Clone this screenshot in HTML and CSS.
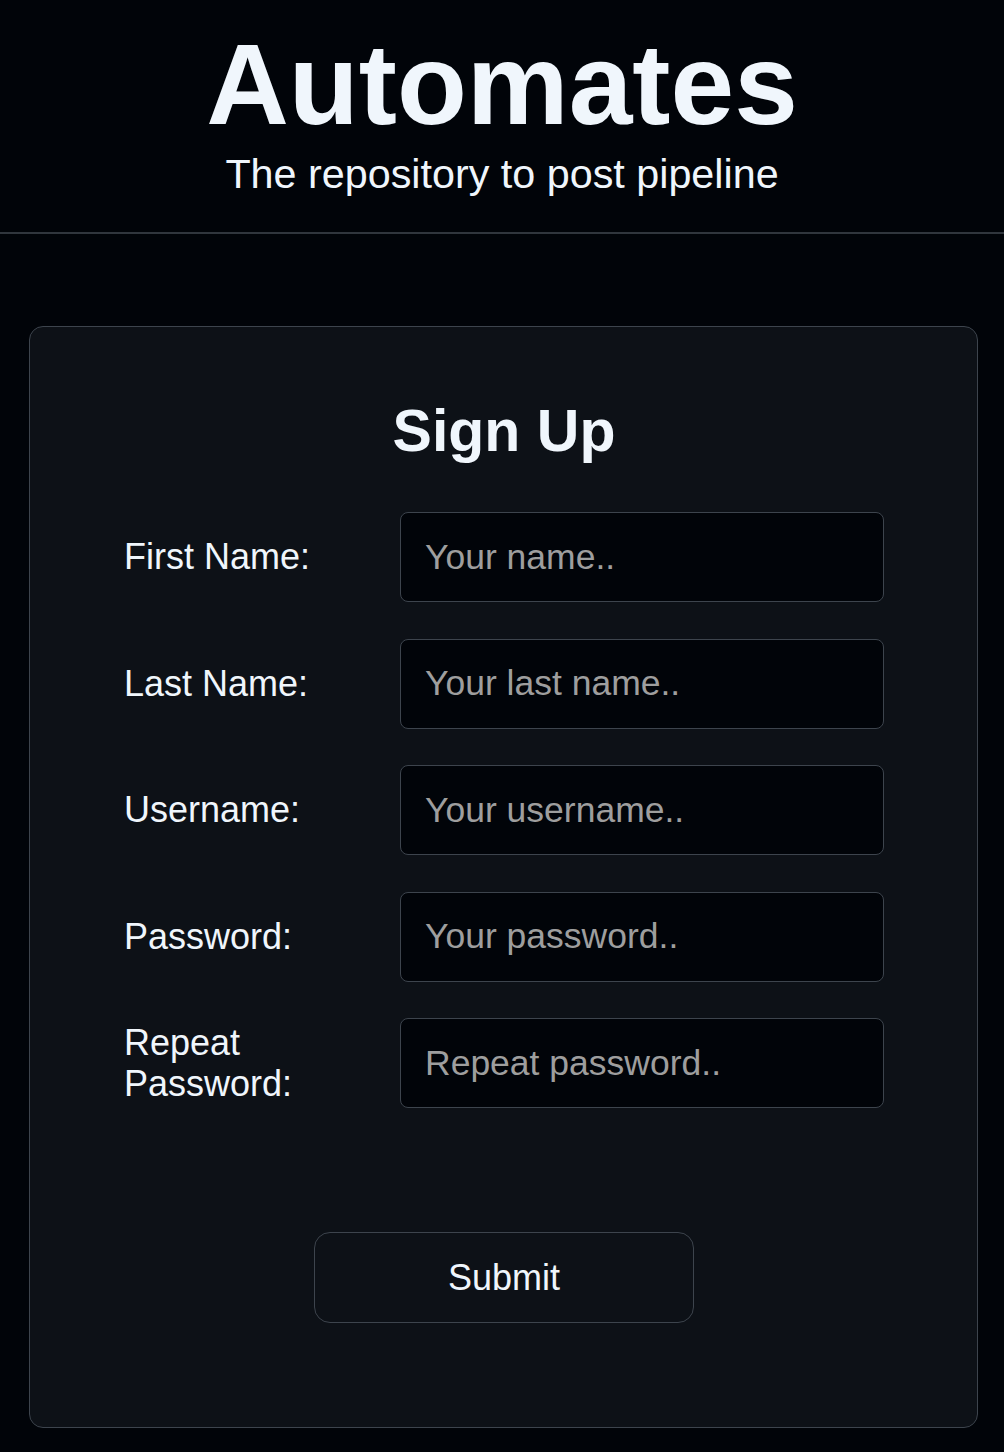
FILE: index.html
```html
<!DOCTYPE html>
<html lang="en">
<head>
<meta charset="utf-8">
<title>Automates - Sign Up</title>
<link rel="stylesheet" href="styles.css">
</head>
<body>
<header class="site-header">
  <h1 class="site-title">Automates</h1>
  <p class="site-tagline">The repository to post pipeline</p>
</header>
<main class="card">
  <h2 class="card-title">Sign Up</h2>
  <form class="signup-form">
    <label class="field-label" for="first">First Name:</label>
    <input class="field-input" id="first" type="text" placeholder="Your name..">
    <label class="field-label" for="last">Last Name:</label>
    <input class="field-input" id="last" type="text" placeholder="Your last name..">
    <label class="field-label" for="user">Username:</label>
    <input class="field-input" id="user" type="text" placeholder="Your username..">
    <label class="field-label" for="pass">Password:</label>
    <input class="field-input" id="pass" type="password" placeholder="Your password..">
    <label class="field-label" for="pass2">Repeat Password:</label>
    <input class="field-input" id="pass2" type="password" placeholder="Repeat password..">
    <div class="submit-row">
      <button class="submit-btn" type="submit">Submit</button>
    </div>
  </form>
</main>
</body>
</html>
```

FILE: styles.css
```css
* {
  box-sizing: border-box;
}

html, body {
  margin: 0;
  padding: 0;
  background: #010409;
}

body {
  font-family: "Liberation Sans", Helvetica, Arial, sans-serif;
  color: #f0f6fc;
  min-height: 1452px;
  overflow: hidden;
}

.site-header {
  padding: 27px 0 34px;
  text-align: center;
  border-bottom: 2px solid #30363d;
}

.site-title {
  margin: 0;
  font-size: 114.5px;
  line-height: 114px;
  font-weight: 700;
  color: #f0f6fc;
}

.site-tagline {
  margin: 9px 0 0;
  font-size: 41.3px;
  line-height: 48px;
  color: #f0f6fc;
}

.card {
  margin: 92px 26px 0 29px;
  padding: 70px 93px 104px 94px;
  background: #0d1117;
  border: 1px solid #3d444d;
  border-radius: 14px;
}

.card-title {
  margin: 0 0 47px;
  text-align: center;
  font-size: 59px;
  line-height: 68px;
  font-weight: 700;
  color: #f0f6fc;
}

.signup-form {
  display: grid;
  grid-template-columns: 276px 1fr;
  row-gap: 36.5px;
  align-items: center;
}

.field-label {
  font-size: 36px;
  line-height: 1.15;
  color: #f0f6fc;
  padding-right: 20px;
}

.field-input {
  height: 90px;
  width: 100%;
  margin: 0;
  padding: 0 24px;
  font-family: "Liberation Sans", Helvetica, Arial, sans-serif;
  font-size: 35.5px;
  color: #f0f6fc;
  background: #010409;
  border: 1px solid #3d444d;
  border-radius: 8px;
  outline: none;
}

.field-input::placeholder {
  color: #9e9e9e;
  opacity: 1;
}

.submit-row {
  grid-column: 1 / -1;
  display: flex;
  justify-content: center;
  margin-top: 87.5px;
}

.submit-btn {
  width: 50%;
  height: 91px;
  font-family: "Liberation Sans", Helvetica, Arial, sans-serif;
  font-size: 36px;
  color: #f0f6fc;
  background: #0d1117;
  border: 1px solid #3d444d;
  border-radius: 16px;
  cursor: pointer;
}
```
